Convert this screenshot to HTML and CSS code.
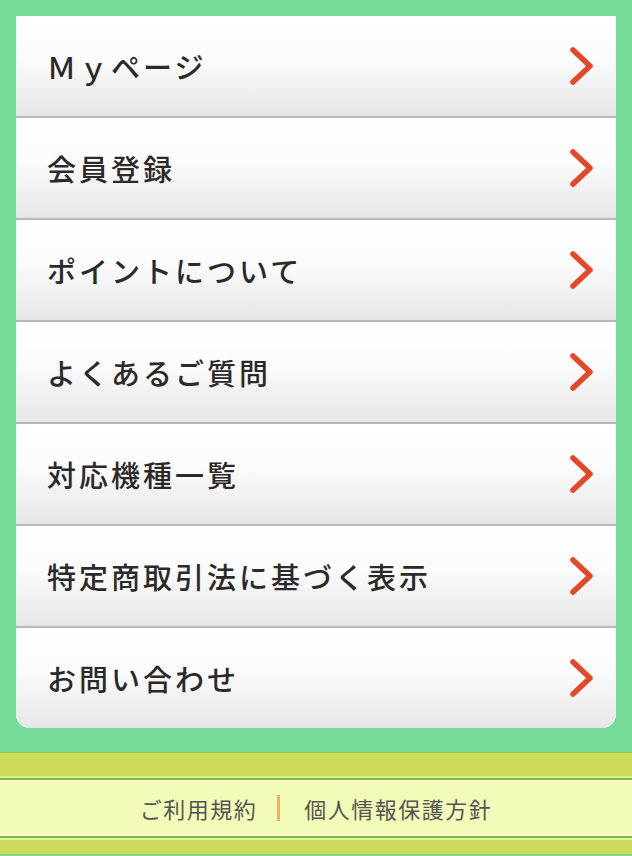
FILE: index.html
```html
<!DOCTYPE html>
<html lang="ja">
<head>
    <meta charset="UTF-8">
    <meta name="viewport" content="width=device-width, initial-scale=1.0">
    <title>メニュー</title>
    <link rel="stylesheet" href="styles.css">
</head>
<body>
    <!-- Main menu -->
    <ul class="menu">
        <li><a href="#">Ｍｙページ<svg class="arrow" viewBox="0 0 30 40"><path d="M6 4 L23 20 L6 36"/></svg></a></li>
        <li><a href="#">会員登録<svg class="arrow" viewBox="0 0 30 40"><path d="M6 4 L23 20 L6 36"/></svg></a></li>
        <li><a href="#">ポイントについて<svg class="arrow" viewBox="0 0 30 40"><path d="M6 4 L23 20 L6 36"/></svg></a></li>
        <li><a href="#">よくあるご質問<svg class="arrow" viewBox="0 0 30 40"><path d="M6 4 L23 20 L6 36"/></svg></a></li>
        <li><a href="#">対応機種一覧<svg class="arrow" viewBox="0 0 30 40"><path d="M6 4 L23 20 L6 36"/></svg></a></li>
        <li><a href="#">特定商取引法に基づく表示<svg class="arrow" viewBox="0 0 30 40"><path d="M6 4 L23 20 L6 36"/></svg></a></li>
        <li><a href="#">お問い合わせ<svg class="arrow" viewBox="0 0 30 40"><path d="M6 4 L23 20 L6 36"/></svg></a></li>
    </ul>

    <!-- Footer -->
    <div class="footer">
        <div class="band"></div>
        <div class="links">
            <a href="#">ご利用規約</a><span class="sep"></span><a href="#">個人情報保護方針</a>
        </div>
        <div class="band bottom"></div>
    </div>
</body>
</html>
```

FILE: styles.css
```css
body { margin: 0; background: #77dc9a; font-family: "Noto Sans CJK JP", "Liberation Sans", sans-serif; }

.menu {
    list-style: none;
    margin: 16px 16px 24px;
    padding: 0;
    background: #fff;
    border-radius: 0 0 14px 14px;
    overflow: hidden;
}
.menu li { border-bottom: 2px solid #b8b8b8; }
.menu li:last-child { border-bottom: none; }
.menu a {
    display: flex;
    align-items: center;
    justify-content: space-between;
    height: 100px;
    padding: 0 19px 0 31px;
    background: linear-gradient(#ffffff 0%, #fbfbfb 45%, #e6e6e6 100%);
    color: #2a2a2a;
    font-size: 29px;
    font-weight: 500;
    letter-spacing: 3px;
    text-decoration: none;
}
.arrow { width: 30px; height: 40px; }
.arrow path {
    fill: none;
    stroke: #e2482a;
    stroke-width: 5.5;
    stroke-linecap: round;
    stroke-linejoin: round;
}

.footer .band {
    height: 23px;
    background: #cbdc5a;
    border-top: 1px solid #93c84c;
    border-bottom: 2px solid #e2ee8c;
}
.footer .band.bottom { height: 14px; border-bottom: none; border-top: 2px solid #e6f09a; }
.links {
    display: flex;
    justify-content: center;
    align-items: center;
    height: 56px;
    background: #f2fbb8;
    border-top: 2px solid #7cbb4e;
    border-bottom: 2px solid #7cbb4e;
    box-shadow: inset 0 2px 0 #fbfdd2, inset 0 -2px 0 #fbfdd2;
}
.links a {
    color: #555;
    font-size: 22px;
    letter-spacing: 1.5px;
    text-decoration: none;
}
.sep {
    display: inline-block;
    width: 3px;
    height: 26px;
    margin: 0 24px 0 20px;
    background: #f0b070;
}
```
